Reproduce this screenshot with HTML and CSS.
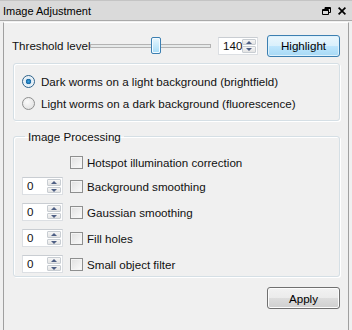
FILE: index.html
```html
<!DOCTYPE html>
<html lang="en">
<head>
    <meta charset="UTF-8">
    <title>Image Adjustment</title>
    <link rel="stylesheet" href="styles.css">
</head>
<body>
    <div class="dock">
        <div class="titlebar">
            <span class="title">Image Adjustment</span>
            <span class="tb-icons">
                <svg width="9" height="8" viewBox="0 0 9 8"><path d="M3 1.5h5.5M.5 3.5h6M3 .5h5.5v5H7M3 .5V2M.5 2.5h6v5h-6z" fill="none" stroke="#000" stroke-width="1"/></svg>
                <svg width="8" height="8" viewBox="0 0 8 8"><path d="M.6 .6l6.8 6.8M7.4 .6l-6.8 6.8" stroke="#000" stroke-width="1.7"/></svg>
            </span>
        </div>
        <div class="content">
            <div class="threshold-row">
                <span class="label">Threshold level</span>
                <div class="slider">
                    <div class="track"></div>
                    <div class="handle"></div>
                </div>
                <div class="spin spin-wide">
                    <span class="spin-value">140</span>
                    <span class="spin-arrows"><span class="up"></span><span class="down"></span></span>
                </div>
                <button class="btn btn-on">Highlight</button>
            </div>

            <div class="group radio-group">
                <label class="option"><span class="radio checked"></span>Dark worms on a light background (brightfield)</label>
                <label class="option"><span class="radio"></span>Light worms on a dark background (fluorescence)</label>
            </div>

            <fieldset class="group proc">
                <legend>Image Processing</legend>
                <div class="proc-row first">
                    <span class="spin-slot"></span>
                    <label class="option"><span class="check"></span>Hotspot illumination correction</label>
                </div>
                <div class="proc-row">
                    <div class="spin"><span class="spin-value">0</span><span class="spin-arrows"><span class="up"></span><span class="down"></span></span></div>
                    <label class="option"><span class="check"></span>Background smoothing</label>
                </div>
                <div class="proc-row">
                    <div class="spin"><span class="spin-value">0</span><span class="spin-arrows"><span class="up"></span><span class="down"></span></span></div>
                    <label class="option"><span class="check"></span>Gaussian smoothing</label>
                </div>
                <div class="proc-row">
                    <div class="spin"><span class="spin-value">0</span><span class="spin-arrows"><span class="up"></span><span class="down"></span></span></div>
                    <label class="option"><span class="check"></span>Fill holes</label>
                </div>
                <div class="proc-row">
                    <div class="spin"><span class="spin-value">0</span><span class="spin-arrows"><span class="up"></span><span class="down"></span></span></div>
                    <label class="option"><span class="check"></span>Small object filter</label>
                </div>
            </fieldset>

            <div class="apply-row">
                <button class="btn">Apply</button>
            </div>
        </div>
    </div>
</body>
</html>
```

FILE: styles.css
```css
body {
    margin: 0;
    background: #f0f0f0;
    font-family: "Liberation Sans", Arial, sans-serif;
    font-size: 11.6px;
    color: #111;
}
.dock {
    width: 352px;
    height: 330px;
    display: flex;
    flex-direction: column;
}
.titlebar {
    height: 21px;
    background: #dadada;
    border-top: 1px solid #c4c4c4;
    border-bottom: 1px solid #a9a9a9;
    display: flex;
    align-items: center;
    padding: 0 6px 0 3px;
    box-sizing: border-box;
    flex: none;
}
.title {
    flex: 1;
    font-size: 11px;
    color: #000;
}
.tb-icons {
    display: flex;
    gap: 7px;
    align-items: center;
    padding-top: 1px;
}
.tb-icons svg {
    display: block;
}
.content {
    flex: 1;
    margin: 1px 3px 0 3px;
    border-left: 1px solid #a0a0a0;
    border-right: 1px solid #a0a0a0;
    border-top: 1px solid #fff;
    padding: 0 8px 0 8px;
}
.threshold-row {
    display: flex;
    align-items: center;
    height: 23px;
    margin-top: 11px;
}
.threshold-row .label {
    width: 78px;
    white-space: nowrap;
    flex: none;
}
.slider {
    position: relative;
    width: 121px;
    height: 18px;
    margin-right: 7px;
    flex: none;
}
.track {
    position: absolute;
    left: 0;
    right: 0;
    top: 7px;
    height: 2px;
    background: #e7eaea;
    border: 1px solid #b3b3b3;
}
.handle {
    position: absolute;
    left: 61px;
    top: 0;
    width: 8px;
    height: 15px;
    border: 1px solid #3c7fb1;
    border-radius: 2px;
    background: linear-gradient(#e8f7fe, #a7dcf7);
    box-shadow: inset 0 0 0 1px #f4fbff;
}
.spin {
    display: flex;
    width: 41px;
    height: 18px;
    box-sizing: border-box;
    border: 1px solid #dcdfe3;
    border-top-color: #c9cdd2;
    background: #fff;
    flex: none;
}
.spin-wide {
    width: 40px;
    margin-right: 9px;
}
.spin-value {
    flex: 1;
    padding-left: 4px;
    line-height: 16px;
}
.spin-arrows {
    width: 15px;
    display: flex;
    flex-direction: column;
    gap: 1px;
    padding: 1px 0;
    box-sizing: border-box;
}
.spin-arrows span {
    flex: 1;
    margin-right: 1px;
    border: 1px solid #c8cdd2;
    border-radius: 1px;
    background: linear-gradient(#f6f6f6, #e4e4e4);
    position: relative;
}
.spin-arrows span::after {
    content: "";
    position: absolute;
    left: 3px;
    top: 1px;
    border-left: 3px solid transparent;
    border-right: 3px solid transparent;
}
.spin-arrows .up::after {
    border-bottom: 3px solid #4e5f84;
}
.spin-arrows .down::after {
    border-top: 3px solid #4e5f84;
}
.btn {
    font-family: "Liberation Sans", Arial, sans-serif;
    font-size: 11.6px;
    color: #000;
    width: 73px;
    height: 22px;
    border: 1px solid #707070;
    border-radius: 3px;
    background: linear-gradient(#f2f2f2 0%, #ebebeb 50%, #dddddd 51%, #cfcfcf 100%);
    box-shadow: inset 0 0 0 1px #fcfcfc;
    padding: 0;
    flex: none;
}
.btn-on {
    border-color: #3c7fb1;
    background: linear-gradient(#eaf6fd 0%, #d9f0fc 50%, #bee6fd 51%, #a7d9f5 100%);
    box-shadow: inset 0 0 0 1px #ddf1fc;
}
.group {
    border: 1px solid #d5dfe5;
    border-radius: 3px;
    box-shadow: inset 1px 1px 0 #fff, 1px 1px 0 #fff;
    margin-left: 1px;
}
.radio-group {
    margin-top: 6px;
    height: 56px;
    display: flex;
    flex-direction: column;
    justify-content: center;
    gap: 9px;
    padding-left: 8px;
}
.option {
    display: flex;
    align-items: center;
    gap: 6px;
    white-space: nowrap;
}
.radio {
    width: 11px;
    height: 11px;
    border-radius: 50%;
    border: 1px solid #8e8f8f;
    background: radial-gradient(circle at 40% 35%, #fbfbfb, #dcdcdc);
    flex: none;
}
.radio.checked {
    border-color: #2c628b;
    background: radial-gradient(circle, #38a4e6 0, #17659f 2.5px, #d9e9f5 3px, #eef3f7 5px);
}
.check {
    width: 11px;
    height: 11px;
    border: 1px solid #8e8f8f;
    background: linear-gradient(135deg, #e0e0e0, #fbfbfb);
    box-shadow: inset 0 0 0 1px #f4f4f4;
    flex: none;
}
.proc .option {
    gap: 4px;
}
.proc {
    margin: 9px 0 0 1px;
    padding: 8px 0 4px 8px;
    min-width: 0;
    height: 147px;
    box-sizing: border-box;
}
.proc legend {
    padding: 0 3px;
    margin-left: 3px;
}
.proc-row {
    display: flex;
    align-items: center;
    gap: 7px;
    height: 26px;
}
.proc-row.first {
    height: 22px;
}
.spin-slot {
    width: 41px;
}
.apply-row {
    display: flex;
    justify-content: flex-end;
    margin-top: 10px;
}
```
